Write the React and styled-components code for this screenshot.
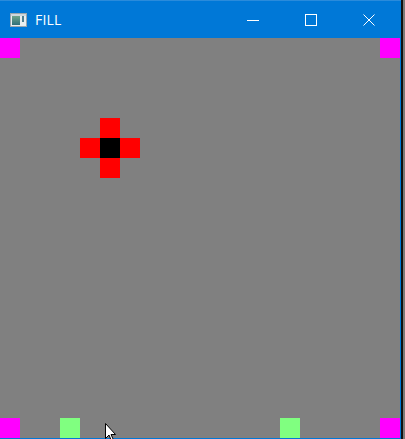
import React from 'react';
import styled, { createGlobalStyle } from 'styled-components';

const Global = createGlobalStyle`
  html, body {
    margin: 0;
    padding: 0;
    background: #7a7a7a;
    overflow: hidden;
  }
`;

const Screen = styled.div`
  display: flex;
  width: 405px;
  height: 439px;
`;

const Window = styled.div`
  width: 400px;
  border-right: 1px solid #0078d7;
  border-bottom: 1px solid #0078d7;
  display: flex;
  flex-direction: column;
  position: relative;
`;

const Shadow = styled.div`
  width: 2px;
  background: #111;
`;

const TitleBar = styled.div`
  height: 38px;
  margin-right: -1px;
  padding-right: 3px;
  background: #0078d7;
  border-top: 1px solid #2a8bdb;
  box-sizing: border-box;
  display: flex;
  align-items: center;
  color: #fff;
  font-family: "Open Sans", "Noto Sans", sans-serif;
  font-size: 14px;
`;

const AppIcon = styled.svg`
  margin: 0 8px 0 10px;
  flex-shrink: 0;
`;

const Title = styled.span`
  flex: 1;
  letter-spacing: 0.2px;
`;

const CaptionButton = styled.div`
  width: 58px;
  height: 100%;
  display: flex;
  align-items: center;
  justify-content: center;
`;

const Canvas = styled.div`
  width: 400px;
  height: 400px;
  background: #808080;
  display: grid;
  grid-template-columns: repeat(20, 20px);
  grid-template-rows: repeat(20, 20px);
`;

const Cell = styled.div`
  grid-column: ${p => p.$x + 1};
  grid-row: ${p => p.$y + 1};
  background: ${p => p.$color};
`;

const Cursor = styled.svg`
  position: absolute;
  left: 105px;
  top: 423px;
`;

const MAGENTA = '#ff00ff';
const GREEN = '#80ff80';
const RED = '#ff0000';

const cells = [
  [0, 0, MAGENTA], [19, 0, MAGENTA], [0, 19, MAGENTA], [19, 19, MAGENTA],
  [3, 19, GREEN], [14, 19, GREEN],
  [5, 4, RED], [4, 5, RED], [6, 5, RED], [5, 6, RED],
  [5, 5, '#000000'],
];

export default function App() {
  return (
    <Screen>
      <Global />
      <Window>
        <TitleBar>
          <AppIcon width="17" height="14" viewBox="0 0 17 14">
            <defs>
              <linearGradient id="pane" x1="0" y1="0" x2="0" y2="1">
                <stop offset="0" stopColor="#6fa58a" />
                <stop offset="1" stopColor="#2f6f7a" />
              </linearGradient>
            </defs>
            <rect x="0.5" y="0.5" width="16" height="13" fill="#e9eef0" stroke="#9aa6ad" />
            <rect x="1" y="1" width="15" height="2" fill="#cfd8dd" />
            <rect x="2" y="3" width="8" height="9" fill="url(#pane)" />
            <rect x="12" y="3" width="2" height="6" fill="#4f7f8f" />
          </AppIcon>
          <Title>FILL</Title>
          <CaptionButton>
            <svg width="12" height="12" viewBox="0 0 12 12">
              <line x1="0" y1="6.5" x2="12" y2="6.5" stroke="#fff" strokeWidth="1" />
            </svg>
          </CaptionButton>
          <CaptionButton>
            <svg width="12" height="12" viewBox="0 0 12 12">
              <rect x="0.5" y="0.5" width="11" height="11" fill="none" stroke="#fff" strokeWidth="1" />
            </svg>
          </CaptionButton>
          <CaptionButton>
            <svg width="12" height="12" viewBox="0 0 12 12">
              <path d="M0.5 0.5 L11.5 11.5 M11.5 0.5 L0.5 11.5" stroke="#fff" strokeWidth="1" />
            </svg>
          </CaptionButton>
        </TitleBar>
        <Canvas>
          {cells.map(([x, y, c]) => (
            <Cell key={`${x}-${y}`} $x={x} $y={y} $color={c} />
          ))}
        </Canvas>
        <Cursor width="12" height="19" viewBox="0 0 12 19">
          <path d="M0.5 0.5 L0.5 15.5 L4 12 L6.5 18 L8.5 17 L6 11.5 L10.5 11.5 Z" fill="#fff" stroke="#000" strokeWidth="1" />
        </Cursor>
      </Window>
      <Shadow />
    </Screen>
  );
}
